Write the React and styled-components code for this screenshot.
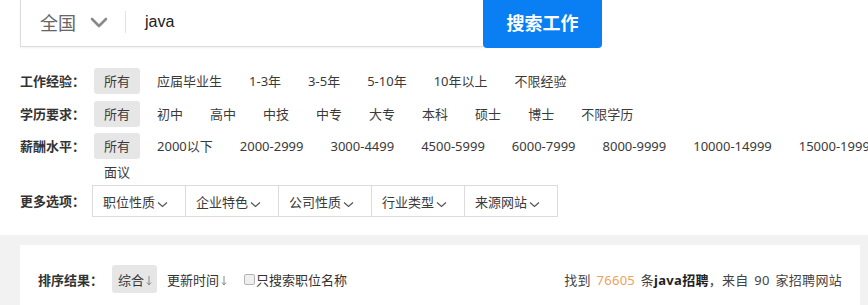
import React from "react";
import styled, { createGlobalStyle } from "styled-components";

const Global = createGlobalStyle`
  html, body { margin: 0; padding: 0; background: #fff; overflow: hidden; }
  body {
    font-family: "Noto Sans", "Noto Sans CJK SC", sans-serif;
    color: #333;
    font-size: 13px;
  }
`;

const Page = styled.div`
  width: 868px;
`;

const Top = styled.div`
  padding: 0 20px 18px 20px;
`;

const SearchRow = styled.div`
  display: flex;
  align-items: flex-start;
`;

const SearchBox = styled.div`
  width: 463px;
  height: 47px;
  border: 1px solid #dcdcdc;
  border-top: none;
  border-right: none;
  box-shadow: 0 1px 2px rgba(0, 0, 0, 0.06);
  display: flex;
  align-items: center;
  padding-left: 19px;
  padding-bottom: 2px;
  box-sizing: border-box;
`;

const City = styled.span`
  font-size: 18px;
  color: #666;
  font-family: "Noto Sans CJK SC", sans-serif;
`;

const Chevron = styled.svg`
  margin-left: 14px;
  flex: none;
`;

const Sep = styled.span`
  width: 1px;
  height: 22px;
  background: #e2e2e2;
  margin-left: 17px;
`;

const Query = styled.span`
  margin-left: 19px;
  font-size: 16px;
  color: #222;
  font-family: "Liberation Sans", sans-serif;
`;

const SearchButton = styled.button`
  width: 119px;
  height: 48px;
  border: none;
  border-radius: 0 0 4px 4px;
  background: #0a7ef3;
  color: #fff;
  font-size: 18px;
  font-weight: bold;
  font-family: "Noto Sans CJK SC", sans-serif;
  padding: 0 0 4px 0;
`;

const Filters = styled.div`
  margin-top: 20px;
  display: flex;
  flex-direction: column;
`;

const Row = styled.div`
  display: flex;
  align-items: flex-start;
  margin-bottom: ${(p) => (p.$tight ? "0" : "6.5px")};
`;

const Label = styled.div`
  width: 74px;
  flex: none;
  line-height: ${(p) => p.$lh || 26}px;
  font-weight: bold;
  color: #333;
  white-space: nowrap;
`;

const Items = styled.div`
  display: flex;
  flex-wrap: wrap;
  width: 830px;
  flex: none;
`;

const Item = styled.span`
  padding: 0 10px;
  margin-right: 7px;
  line-height: 26px;
  border-radius: 3px;
  color: #3a3a3a;
  white-space: nowrap;
  background: ${(p) => (p.$active ? "#e6e6e6" : "transparent")};
`;

const DropGroup = styled.div`
  display: flex;
  border: 1px solid #dcdcdc;
  margin-left: -2px;
`;

const Drop = styled.div`
  width: 93px;
  height: 30px;
  box-sizing: border-box;
  padding-left: 10px;
  display: flex;
  align-items: center;
  color: #3a3a3a;
  border-left: 1px solid #dcdcdc;
  &:first-child {
    width: 92px;
    border-left: none;
  }
`;

const SmallChev = styled.svg`
  margin-left: 2px;
  margin-top: 6px;
`;

const Band = styled.div`
  background: #f2f2f2;
  padding: 10px 8px 0 20px;
`;

const Card = styled.div`
  background: #fff;
  padding: 20px 18px 30px 18px;
  display: flex;
  align-items: center;
  justify-content: space-between;
`;

const SortLeft = styled.div`
  display: flex;
  align-items: center;
`;

const SortLabel = styled.span`
  font-weight: bold;
  color: #333;
  margin-right: 9px;
  white-space: nowrap;
`;

const SortPill = styled.span`
  display: flex;
  align-items: center;
  height: 28px;
  padding: 0 5px 0 6px;
  margin-right: 4px;
  border-radius: 3px;
  background: ${(p) => (p.$active ? "#e6e6e6" : "transparent")};
  color: #333;
`;

const ArrowSvg = styled.svg`
  margin-left: 2px;
  margin-top: 3px;
  flex: none;
`;

const CheckLabel = styled.label`
  display: flex;
  align-items: center;
  color: #333;
  margin-left: 8px;
`;

const Box = styled.span`
  width: 11px;
  height: 11px;
  border: 1px solid #b5b5b5;
  border-radius: 2px;
  background: #efefef;
  margin-right: 1px;
  box-sizing: border-box;
`;

const Summary = styled.div`
  color: #444;
  word-spacing: 2px;
  letter-spacing: 0.3px;
`;

const Num = styled.span`
  color: #ee9f5c;
`;

const Strong = styled.b`
  color: #222;
`;

const ChevronIcon = () => (
  <Chevron width="18" height="11" viewBox="0 0 18 11">
    <polyline points="2,2 9,9 16,2" fill="none" stroke="#8a8a8a" strokeWidth="2.6" strokeLinecap="round" strokeLinejoin="round" />
  </Chevron>
);

const SmallChevron = () => (
  <SmallChev width="11" height="7" viewBox="0 0 11 7">
    <polyline points="1,1.5 5.5,5.5 10,1.5" fill="none" stroke="#555" strokeWidth="1.2" />
  </SmallChev>
);

const DownArrow = () => (
  <ArrowSvg width="6" height="11" viewBox="0 0 6 11">
    <line x1="3" y1="1" x2="3" y2="10" stroke="#888" strokeWidth="1" />
    <polyline points="1,7.5 3,10 5,7.5" fill="none" stroke="#888" strokeWidth="1" />
  </ArrowSvg>
);

const rows = [
  { label: "工作经验：", items: ["所有", "应届毕业生", "1-3年", "3-5年", "5-10年", "10年以上", "不限经验"] },
  { label: "学历要求：", items: ["所有", "初中", "高中", "中技", "中专", "大专", "本科", "硕士", "博士", "不限学历"] },
  {
    label: "薪酬水平：",
    tight: true,
    items: ["所有", "2000以下", "2000-2999", "3000-4499", "4500-5999", "6000-7999", "8000-9999", "10000-14999", "15000-19999", "面议"],
  },
];

const drops = ["职位性质", "企业特色", "公司性质", "行业类型", "来源网站"];

export default function App() {
  return (
    <Page>
      <Global />
      <Top>
        <SearchRow>
          <SearchBox>
            <City>全国</City>
            <ChevronIcon />
            <Sep />
            <Query>java</Query>
          </SearchBox>
          <SearchButton>搜索工作</SearchButton>
        </SearchRow>
        <Filters>
          {rows.map((r) => (
            <Row key={r.label} $tight={r.tight}>
              <Label>{r.label}</Label>
              <Items>
                {r.items.map((it, i) => (
                  <Item key={it} $active={i === 0}>
                    {it}
                  </Item>
                ))}
              </Items>
            </Row>
          ))}
          <Row $tight>
            <Label $lh={32}>更多选项：</Label>
            <DropGroup>
              {drops.map((d) => (
                <Drop key={d}>
                  {d}
                  <SmallChevron />
                </Drop>
              ))}
            </DropGroup>
          </Row>
        </Filters>
      </Top>
      <Band>
        <Card>
          <SortLeft>
            <SortLabel>排序结果：</SortLabel>
            <SortPill $active>
              综合
              <DownArrow />
            </SortPill>
            <SortPill>
              更新时间
              <DownArrow />
            </SortPill>
            <CheckLabel>
              <Box />
              只搜索职位名称
            </CheckLabel>
          </SortLeft>
          <Summary>
            找到 <Num>76605</Num> 条<Strong>java招聘</Strong>，来自 90 家招聘网站
          </Summary>
        </Card>
      </Band>
    </Page>
  );
}
